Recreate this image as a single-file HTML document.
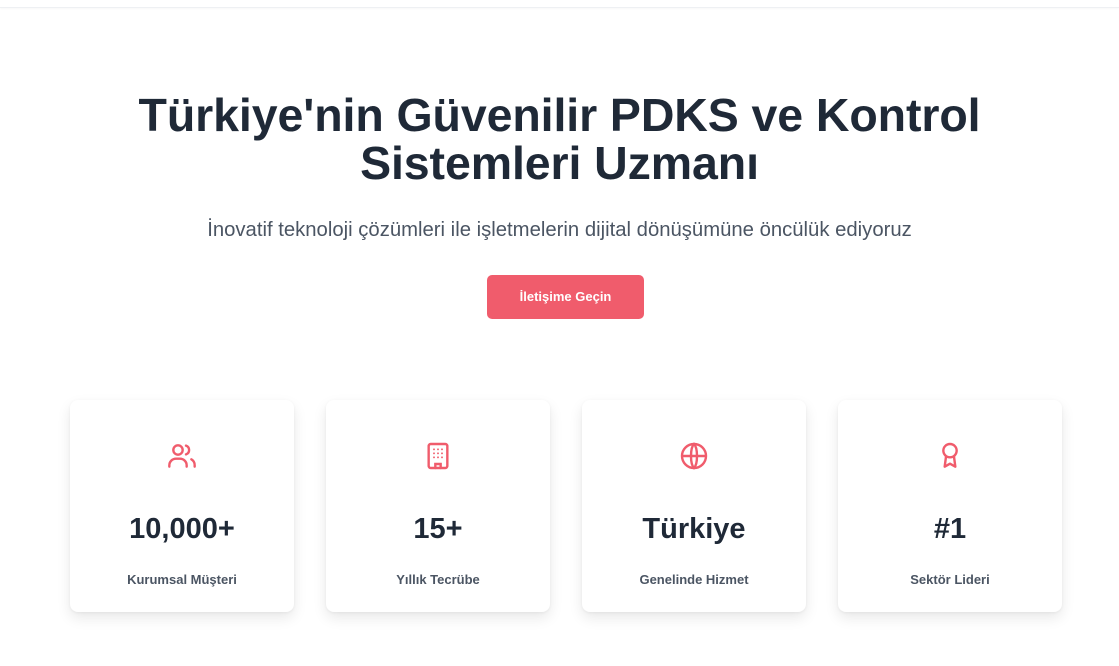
<!DOCTYPE html>
<html><head><meta charset="utf-8"><style>
*{margin:0;padding:0;box-sizing:border-box}
body{width:1119px;height:666px;background:#fff;font-family:"Liberation Sans",sans-serif;position:relative;overflow:hidden}
.top{position:absolute;top:0;left:0;right:0;height:8px;border-bottom:1px solid #eef0f3;box-shadow:0 1px 2px rgba(0,0,0,.03)}
h1{position:absolute;top:91px;left:0;width:1119px;text-align:center;font-size:46.5px;line-height:48px;font-weight:700;color:#1f2937;letter-spacing:-0.1px}
.sub{position:absolute;top:219px;left:0;width:1119px;text-align:center;font-size:20.3px;color:#4b5563}
.btn{position:absolute;left:487px;top:275px;width:157px;height:44px;background:#f05c6c;border-radius:5px;color:#fff;font-size:13px;font-weight:700;text-align:center;line-height:44px}
.card{position:absolute;top:400px;width:224px;height:212px;background:#fff;border-radius:8px;box-shadow:0 6px 14px rgba(0,0,0,.09),0 1px 3px rgba(0,0,0,.05);text-align:center}
.card svg{position:absolute;left:96px;top:40px}
.num{position:absolute;top:113px;width:100%;font-size:29px;font-weight:700;color:#1f2937}
.lbl{position:absolute;top:172px;width:100%;font-size:13px;font-weight:700;color:#4b5563}
</style></head><body>
<div class="top"></div>
<h1>Türkiye'nin Güvenilir PDKS ve Kontrol<br>Sistemleri Uzmanı</h1>
<div class="sub">İnovatif teknoloji çözümleri ile işletmelerin dijital dönüşümüne öncülük ediyoruz</div>
<div class="btn">İletişime Geçin</div>

<div class="card" style="left:70px">
<svg width="32" height="32" viewBox="0 0 24 24" fill="none" stroke="#f05c6c" stroke-width="1.8" stroke-linecap="round"><circle cx="9" cy="7.5" r="3.5"/><path d="M2.5 20v-1a5 5 0 0 1 5-5h3a5 5 0 0 1 5 5v1"/><path d="M15 4.2a3.5 3.5 0 0 1 0 6.6"/><path d="M19 14.5a5 5 0 0 1 2.5 4.5v1"/></svg>
<div class="num">10,000+</div><div class="lbl">Kurumsal Müşteri</div></div>

<div class="card" style="left:326px">
<svg width="32" height="32" viewBox="0 0 24 24" fill="none" stroke="#f05c6c" stroke-width="1.8" stroke-linecap="round"><rect x="5" y="3" width="14" height="18" rx="1.5"/><path d="M9 7h0M12 7h0M15 7h0M9 10h0M12 10h0M15 10h0M9 13h0M12 13h0M15 13h0" stroke-width="1.4"/><path d="M10 21v-3h4v3"/></svg>
<div class="num">15+</div><div class="lbl">Yıllık Tecrübe</div></div>

<div class="card" style="left:582px">
<svg width="32" height="32" viewBox="0 0 24 24" fill="none" stroke="#f05c6c" stroke-width="1.8"><circle cx="12" cy="12" r="9"/><path d="M3 12h18"/><path d="M12 3c3 3 3 15 0 18c-3-3-3-15 0-18z"/></svg>
<div class="num">Türkiye</div><div class="lbl">Genelinde Hizmet</div></div>

<div class="card" style="left:838px">
<svg width="32" height="32" viewBox="0 0 24 24" fill="none" stroke="#f05c6c" stroke-width="1.8" stroke-linejoin="round"><circle cx="12" cy="8" r="5"/><path d="M9 12.5L8 20l4-2.2 4 2.2-1-7.5"/></svg>
<div class="num">#1</div><div class="lbl">Sektör Lideri</div></div>
</body></html>
